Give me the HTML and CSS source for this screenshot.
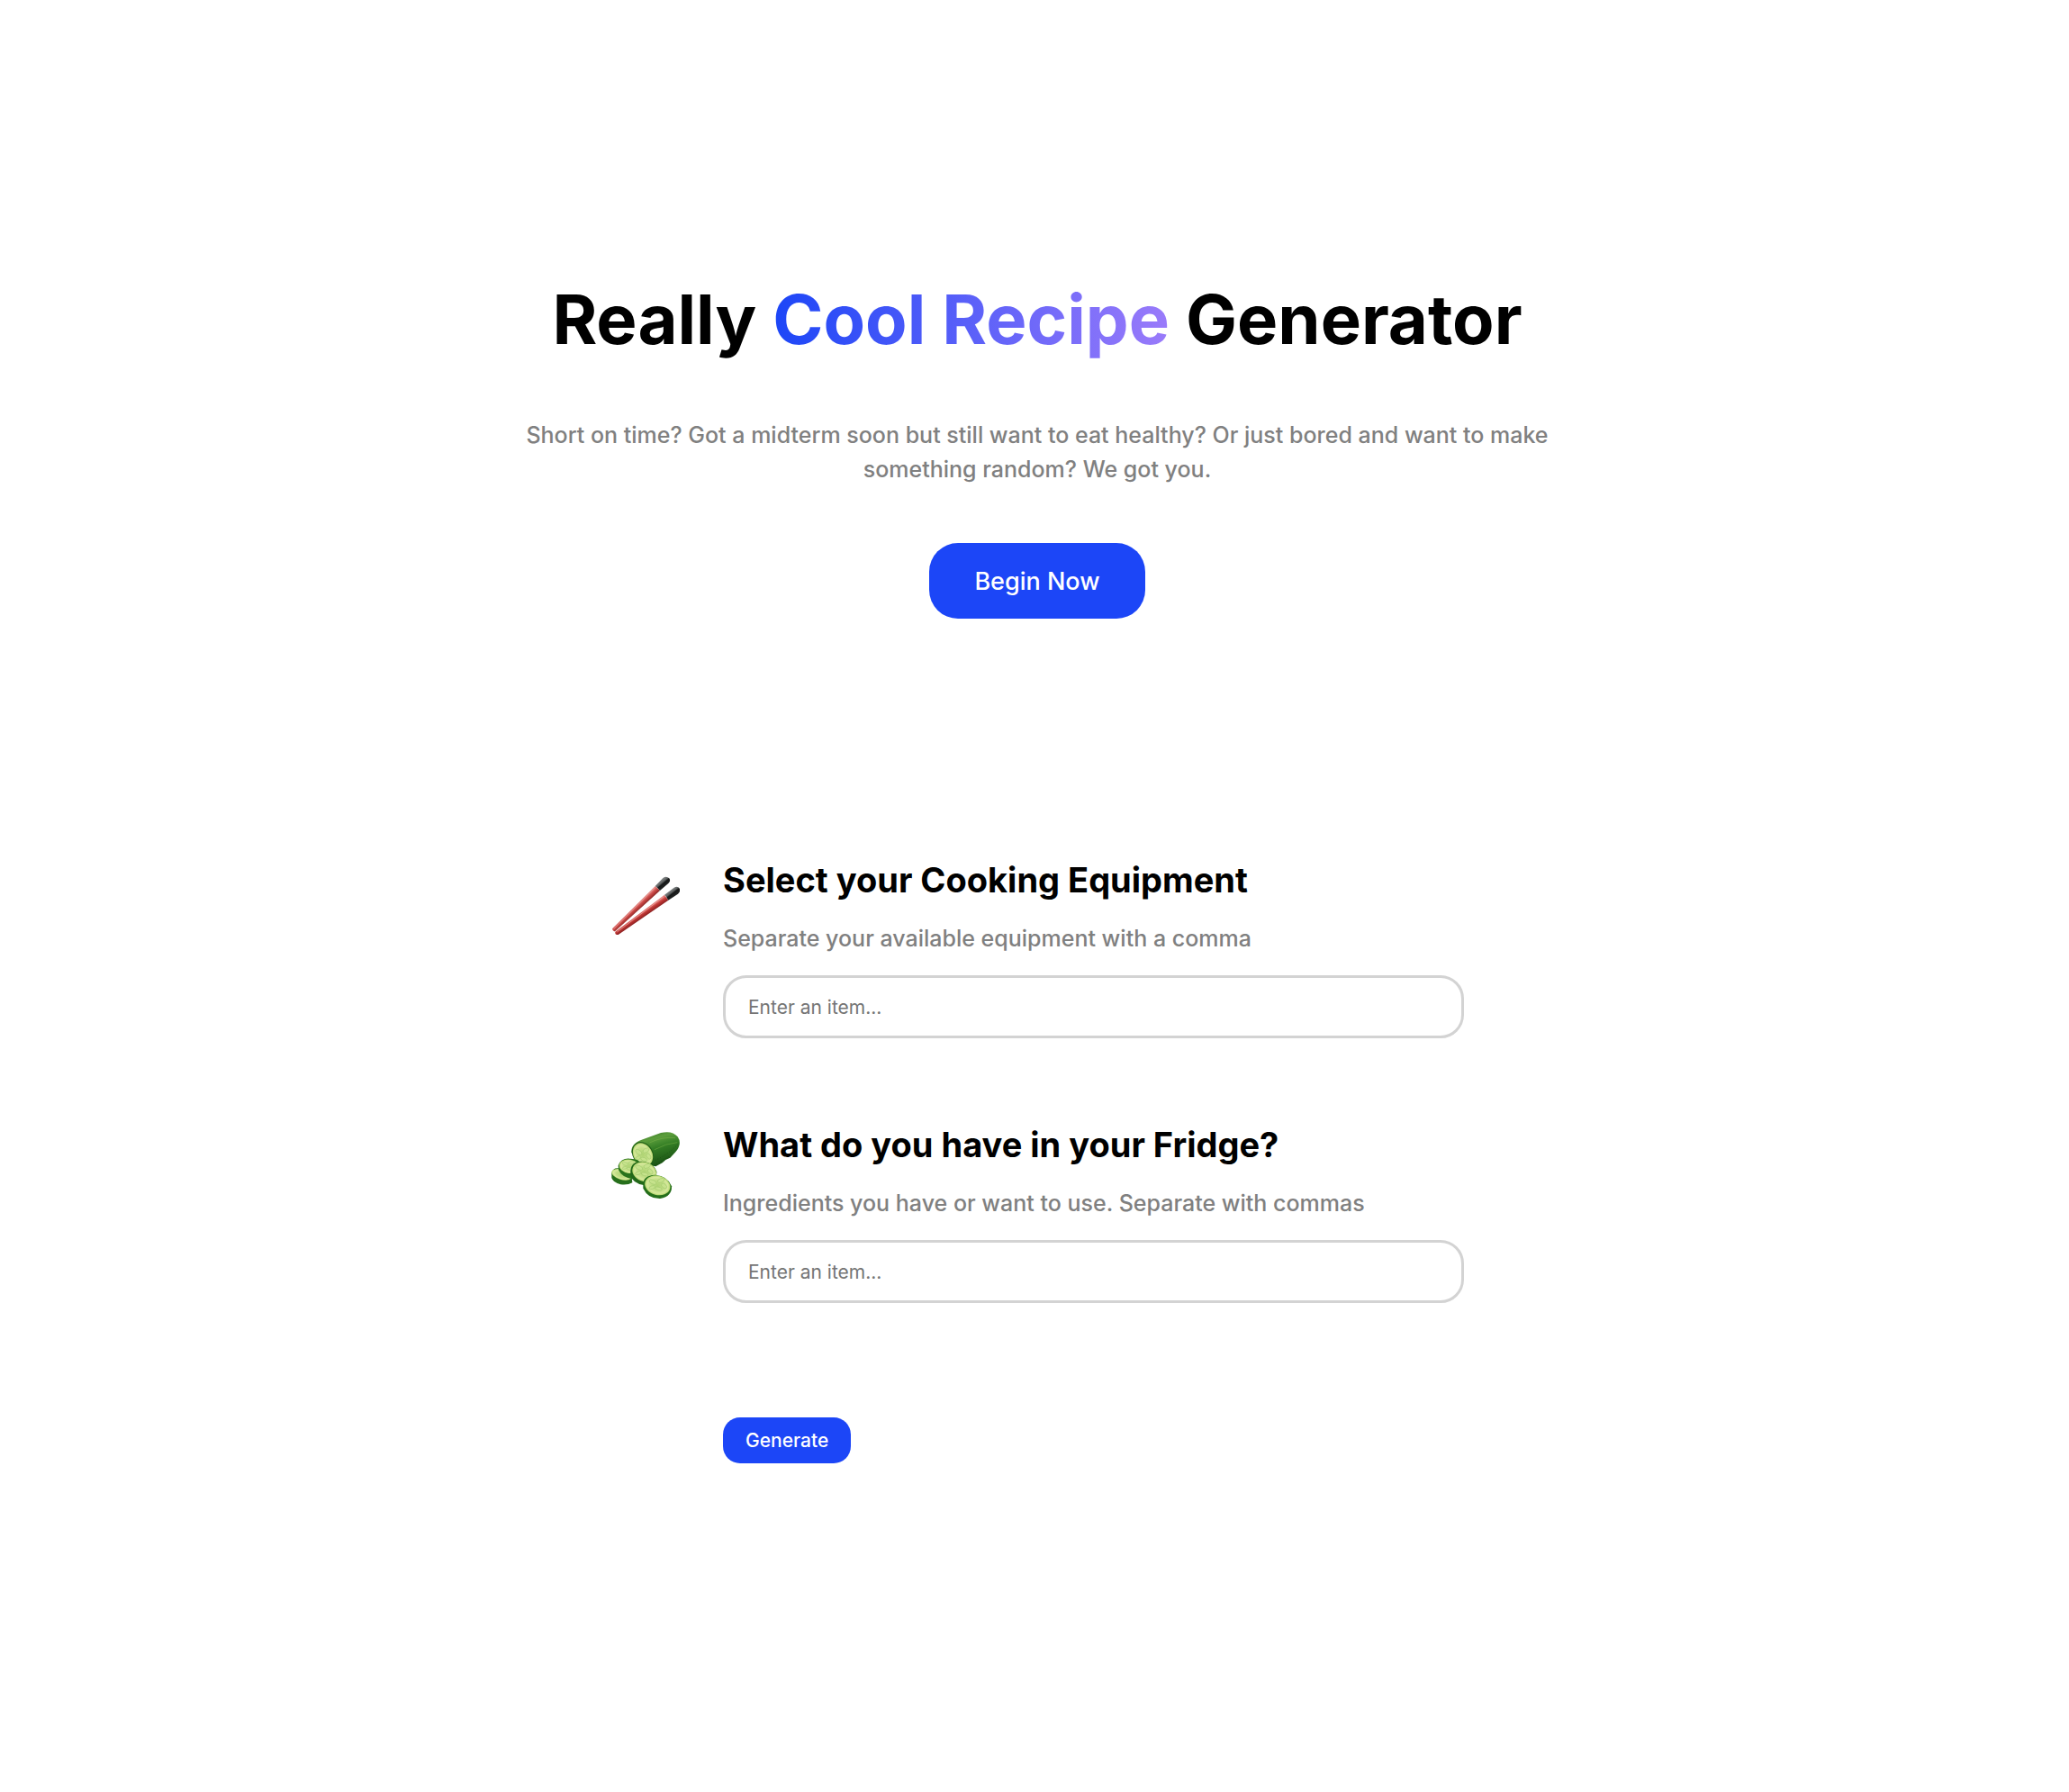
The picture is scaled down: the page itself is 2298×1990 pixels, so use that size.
FILE: index.html
```html
<!DOCTYPE html>
<html lang="en">
<head>
  <meta charset="utf-8">
  <meta name="viewport" content="width=device-width, initial-scale=1">
  <title>Really Cool Recipe Generator</title>
  <link rel="stylesheet" href="styles.css">
</head>
<body>
  <header class="hero">
    <h1 class="hero-title">Really <span class="gradient-text">Cool Recipe</span> Generator</h1>
    <p class="hero-text">Short on time? Got a midterm soon but still want to eat healthy? Or just bored and want to make something random? We got you.</p>
    <button class="button button-large" type="button">Begin Now</button>
  </header>

  <main>
    <form class="recipe-form">
      <section class="step">
        <svg class="step-icon" viewBox="54 36 231 231" aria-hidden="true">
          <defs>
            <linearGradient id="stick" gradientUnits="userSpaceOnUse" x1="136" y1="166" x2="150" y2="181">
              <stop offset="0" stop-color="#e58f8b"/><stop offset=".5" stop-color="#cb4846"/><stop offset="1" stop-color="#8c2826"/>
            </linearGradient>
            <linearGradient id="stick2" gradientUnits="userSpaceOnUse" x1="152" y1="192" x2="163" y2="208">
              <stop offset="0" stop-color="#e07a76"/><stop offset=".45" stop-color="#bf3533"/><stop offset="1" stop-color="#862020"/>
            </linearGradient>
            <linearGradient id="grip" x1=".25" y1=".25" x2=".7" y2=".75">
              <stop offset="0" stop-color="#969898"/><stop offset=".4" stop-color="#5c6060"/><stop offset=".55" stop-color="#151717"/><stop offset="1" stop-color="#252727"/>
            </linearGradient>
          </defs>
          <path fill="url(#stick)" d="M60 244 L203 102 L219 117 L70 252 Q61 255 60 244Z"/>
          <path fill="url(#grip)" d="M203 102 L229 75 Q240 67 250 76 Q256 85 247 93 L219 117 Q212 108 203 102Z"/>
          <path fill="url(#stick2)" d="M70 254 L234 131 L247 149 L80 264 Q68 265 70 254Z"/>
          <path fill="url(#grip)" d="M234 131 L266 107 Q278 100 285 111 Q288 121 279 128 L247 149 Q242 138 234 131Z"/>
          <path fill="none" stroke="#f5b5b0" stroke-width="3" opacity=".6" d="M65 245 L202 108 M76 255 L232 137"/>
        </svg>
        <div class="step-body">
          <h2 class="step-title">Select your Cooking Equipment</h2>
          <label class="step-label" for="equipment">Separate your available equipment with a comma</label>
          <input class="step-input" id="equipment" type="text" placeholder="Enter an item...">
        </div>
      </section>

      <section class="step">
        <svg class="step-icon" viewBox="54 48 231 231" aria-hidden="true">
          <defs>
            <linearGradient id="skin" x1=".2" y1="0" x2=".6" y2="1">
              <stop offset="0" stop-color="#286a1c"/><stop offset=".25" stop-color="#5c9e3c"/><stop offset=".5" stop-color="#347e25"/><stop offset="1" stop-color="#174e12"/>
            </linearGradient>
            <radialGradient id="flesh">
              <stop offset="0" stop-color="#b0d474"/><stop offset=".55" stop-color="#c2de86"/><stop offset=".82" stop-color="#d6e89c"/><stop offset="1" stop-color="#b4d66a"/>
            </radialGradient>
            <g id="seeds" fill="#c6e28c" stroke="#94c262" stroke-width="1">
              <ellipse cx="-13" cy="-7" rx="10" ry="5" transform="rotate(25 -13 -7)"/>
              <ellipse cx="8" cy="-11" rx="9" ry="5" transform="rotate(-20 8 -11)"/>
              <ellipse cx="16" cy="3" rx="8" ry="5" transform="rotate(45 16 3)"/>
              <ellipse cx="2" cy="10" rx="9" ry="4" transform="rotate(15 2 10)"/>
              <ellipse cx="-15" cy="7" rx="8" ry="4" transform="rotate(-20 -15 7)"/>
            </g>
          </defs>
          <path fill="url(#skin)" d="M124 121 Q121 90 158 77 L222 54 Q260 45 278 67 Q294 91 271 118 L253 137 L238 144 L227 154 L205 166 L184 162Z"/>
          <path fill="none" stroke="#80b54b" stroke-width="3" opacity=".45" d="M184 87 Q228 66 270 71 M201 110 Q239 89 277 86"/>
          <path fill="none" stroke="#123f0e" stroke-width="2" stroke-dasharray="3 6" opacity=".7" d="M203 145 Q244 128 279 92 M207 158 L253 131"/>
          <ellipse cx="162" cy="125" rx="34" ry="43" fill="#216019" transform="rotate(-30 162 125)"/>
          <ellipse cx="162" cy="126" rx="31" ry="40" fill="url(#flesh)" transform="rotate(-30 162 126)"/>
          <use href="#seeds" transform="translate(163 128) scale(1.15 1.4)"/>

          <path fill="#276f1c" d="M58 189 Q62 170 80 172 L125 202 L127 220 Q112 229 88 226 Q63 220 58 204Z"/>
          <ellipse cx="91" cy="193" rx="34" ry="17" fill="url(#flesh)" transform="rotate(17 91 193)"/>
          <path fill="#28731c" d="M80 163 Q89 138 118 140 Q151 139 155 158 L125 207 Q92 202 81 178Z"/>
          <ellipse cx="117" cy="166" rx="34" ry="23" fill="url(#flesh)" transform="rotate(8 117 166)"/>
          <use href="#seeds" transform="translate(116 164)"/>
          <path fill="#226819" d="M121 181 Q123 149 156 149 Q198 151 208 184 L207 202 L168 229 Q127 223 121 195Z"/>
          <ellipse cx="167" cy="184" rx="41" ry="32" fill="url(#flesh)" transform="rotate(20 167 184)"/>
          <use href="#seeds" transform="translate(166 179) scale(1.3)"/>
          <path fill="#256f1b" d="M163 225 Q164 196 202 194 Q245 197 258 232 Q260 266 220 273 Q179 274 163 239Z"/>
          <ellipse cx="211" cy="229" rx="43" ry="32" fill="url(#flesh)" transform="rotate(15 211 229)"/>
          <use href="#seeds" transform="translate(212 227) scale(1.3)"/>
        </svg>
        <div class="step-body">
          <h2 class="step-title">What do you have in your Fridge?</h2>
          <label class="step-label" for="ingredients">Ingredients you have or want to use. Separate with commas</label>
          <input class="step-input" id="ingredients" type="text" placeholder="Enter an item...">
        </div>
      </section>

      <div class="form-actions">
        <button class="button button-small" type="button">Generate</button>
      </div>
    </form>
  </main>
</body>
</html>
```

FILE: styles.css
```css
* {
  box-sizing: border-box;
}

body {
  margin: 0;
  padding: 308px 0 128px 6px;
  background: #fff;
  color: #000;
  font-family: Inter, "Liberation Sans", sans-serif;
}

h1,
h2,
p {
  margin: 0;
}

.hero {
  display: flex;
  flex-direction: column;
  align-items: center;
  gap: 63px;
  text-align: center;
}

.hero-title {
  font-size: 76px;
  font-weight: 700;
  line-height: 93px;
}

.gradient-text {
  background: linear-gradient(90deg, #1c46f7, #9a7bfa);
  -webkit-background-clip: text;
  background-clip: text;
  color: transparent;
}

.hero-text {
  max-width: 1160px;
  color: #808080;
  font-size: 25px;
  font-weight: 500;
  line-height: 38px;
}

.button {
  border: 0;
  background: #1c46f7;
  color: #fff;
  font-family: inherit;
  font-weight: 500;
}

.button-large {
  padding: 25px 50px 23px;
  border-radius: 32px;
  font-size: 27px;
  line-height: 36px;
}

.button-small {
  padding: 13px 25px;
  border-radius: 19px;
  font-size: 21px;
  line-height: 25px;
}

.recipe-form {
  display: flex;
  flex-direction: column;
  gap: 95px;
  max-width: 948px;
  margin: 267px auto 0;
}

.step {
  display: grid;
  grid-template-columns: 77px 1fr;
  column-gap: 48px;
}

.step-icon {
  width: 77px;
  height: 77px;
  margin-top: 8px;
}

.step-body {
  display: flex;
  flex-direction: column;
}

.step-title {
  margin-bottom: 26px;
  font-size: 38px;
  font-weight: 700;
  line-height: 46px;
}

.step-label {
  margin-bottom: 25px;
  color: #808080;
  font-size: 25px;
  font-weight: 500;
  line-height: 32px;
}

.step-input {
  width: 100%;
  height: 70px;
  padding: 0 25px;
  border: 3px solid #d3d3d3;
  border-radius: 26px;
  background: #fff;
  color: #000;
  font-family: inherit;
  font-size: 21px;
}

.step-input::placeholder {
  color: #757575;
}

.form-actions {
  padding: 32px 0 0 125px;
}
```
